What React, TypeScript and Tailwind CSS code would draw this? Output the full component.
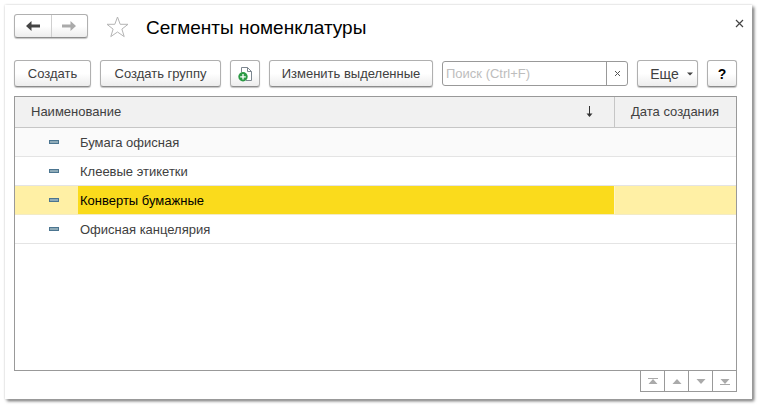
import React from "react";

const buttonBase =
  "flex h-[27px] shrink-0 items-center justify-center rounded-[3px] border border-[#b0b0b0] border-b-[#8c8c8c] bg-linear-to-b from-white from-50% to-[#ededed] shadow-[0_1px_1px_#c4c4c4]";

const rows = [
  { name: "Бумага офисная", date: "" },
  { name: "Клеевые этикетки", date: "" },
  { name: "Конверты бумажные", date: "" },
  { name: "Офисная канцелярия", date: "" },
];

const selectedIndex = 2;

function ItemMark() {
  return (
    <span className="ml-[34px] block h-1 w-2.5 border border-[#4b7590] bg-[#8fabb8] box-border" />
  );
}

function Arrow({ className }: { className: string }) {
  return (
    <svg width="14" height="12" viewBox="0 0 14 12" className={className} aria-hidden="true">
      <path d="M0 6 5.5 1v3.5H14v3H5.5V11z" fill="currentColor" />
    </svg>
  );
}

function NewDocumentIcon() {
  return (
    <svg width="15" height="16" viewBox="0 0 15 16" aria-hidden="true">
      <path d="M3.5 6V1.5h6l4 4v9H8" fill="#fff" stroke="#7d8790" />
      <path d="M9.5 1.5v4h4" fill="none" stroke="#7d8790" />
      <circle cx="5" cy="10.8" r="4.7" fill="#2c9a45" />
      <path d="M5 8v5.6M2.2 10.8h5.6" stroke="#fff" strokeWidth="1.3" />
    </svg>
  );
}

const navigation = [
  { label: "В начало", path: "M2 2h10v1H2zM2.5 8 7 3l4.5 5z" },
  { label: "Вверх", path: "M2.5 8 7 3l4.5 5z" },
  { label: "Вниз", path: "M2.5 3 7 8l4.5-5z" },
  { label: "В конец", path: "M2 8h10v1H2zM2.5 3 7 8l4.5-5z" },
];

export default function App() {
  return (
    <div className="flex min-h-screen bg-white pt-[5px] pr-[9px] pb-[9px] pl-[5px] font-['Liberation_Sans',Arial,sans-serif] text-[13px] leading-4 text-[#404040]">
      <main className="flex min-w-0 flex-1 flex-col bg-white pt-[9px] pr-[15px] pb-[7px] pl-[9px] shadow-[0_0_2px_#d0d0d0,2px_2px_3px_#666]">
        <header className="flex h-6 items-center">
          <div className="flex h-6 w-[74px] shrink-0 rounded-[3px] border border-[#b0b0b0] border-b-[#8c8c8c] bg-linear-to-b from-white from-50% to-[#ededed] shadow-[0_1px_1px_#c4c4c4]">
            <button type="button" aria-label="Назад" className="flex flex-1 items-center justify-center border-r border-[#cfcfcf]">
              <Arrow className="text-[#444]" />
            </button>
            <button type="button" aria-label="Вперед" className="flex flex-1 items-center justify-center">
              <Arrow className="-scale-x-100 text-[#aaa]" />
            </button>
          </div>
          <button type="button" aria-label="В избранное" className="ml-4 shrink-0">
            <svg width="26" height="24" viewBox="0 0 26 24" aria-hidden="true">
              <path d="M13.5 3 16.2 10.3H24L17.9 15.1 20.2 22.6 13.5 18 6.8 22.6 9.1 15.1 3 10.3h7.8z" fill="#fff" stroke="#b4b4b4" />
            </svg>
          </button>
          <h1 className="ml-4 flex-1 pt-1 text-[19px] leading-6 whitespace-nowrap text-black">Сегменты номенклатуры</h1>
          <button type="button" aria-label="Закрыть" className="-mr-[7px] shrink-0 self-start pt-[5px]">
            <svg width="9" height="9" viewBox="0 0 9 9" aria-hidden="true">
              <path d="m1 1 7 7M8 1 1 8" stroke="#444" strokeWidth="1.2" />
            </svg>
          </button>
        </header>

        <div className="mt-[22px] flex items-center gap-[9px] whitespace-nowrap">
          <button type="button" className={`${buttonBase} w-[77px]`}>Создать</button>
          <button type="button" className={`${buttonBase} w-[121px]`}>Создать группу</button>
          <button type="button" aria-label="Создать копированием" className={`${buttonBase} w-[30px]`}>
            <NewDocumentIcon />
          </button>
          <button type="button" className={`${buttonBase} w-[164px]`}>Изменить выделенные</button>
          <div className="flex h-[25px] min-w-0 flex-1 rounded-[3px] border border-[#999] bg-white">
            <input
              type="text"
              aria-label="Поиск"
              placeholder="Поиск (Ctrl+F)"
              className="min-w-0 flex-1 px-[3px] outline-none placeholder:text-[#bdbdbd]"
            />
            <button type="button" aria-label="Очистить" className="flex w-[21px] items-center justify-center border-l border-[#999]">
              <svg width="7" height="7" viewBox="0 0 7 7" aria-hidden="true">
                <path d="m1 1 5 5M6 1 1 6" stroke="#555" />
              </svg>
            </button>
          </div>
          <button type="button" className={`${buttonBase} w-[61px] gap-2 pl-2 text-sm`}>
            Еще
            <svg width="6" height="4" viewBox="0 0 6 4" aria-hidden="true">
              <path d="M0 .5h6L3 3.5z" fill="#444" />
            </svg>
          </button>
          <button type="button" aria-label="Справка" className={`${buttonBase} w-[30px] text-sm font-bold text-black`}>?</button>
        </div>

        <div className="mt-[9px] flex-1 border border-[#999]">
          <table className="w-full table-fixed border-separate border-spacing-0 text-left">
            <colgroup>
              <col className="w-[63px]" />
              <col />
              <col className="w-[121px]" />
            </colgroup>
            <thead>
              <tr className="h-[31px] bg-[#f1f1f1]">
                <th colSpan={2} className="border-r border-b border-[#c6c6c6] pr-5 pl-4 font-normal">
                  <div className="flex items-center justify-between">
                    Наименование
                    <svg width="9" height="12" viewBox="0 0 9 12" aria-hidden="true">
                      <path d="M4.5 0v10" stroke="#333" />
                      <path d="M1.5 7.5 4.5 11l3-3.5z" fill="#333" />
                    </svg>
                  </div>
                </th>
                <th className="border-b border-[#c6c6c6] pl-4 font-normal whitespace-nowrap">Дата создания</th>
              </tr>
            </thead>
            <tbody>
              {rows.map((row, index) => {
                const selected = index === selectedIndex;
                const edge = selected ? "border-b border-[#f3ebc4]" : "border-b border-[#e4e4e4]";
                const pale = selected ? "bg-[#fff0a5]" : index === 0 ? "bg-[#fafafa]" : "bg-white";
                const strong = selected ? "bg-[#fadb1c] border-r border-r-[#fff5c4] text-black" : pale;
                return (
                  <tr key={row.name} className="h-[29px]" aria-selected={selected}>
                    <td className={`${edge} ${pale}`}>
                      <ItemMark />
                    </td>
                    <td className={`${edge} ${strong} pt-0.5 pl-0.5`}>{row.name}</td>
                    <td className={`${edge} ${pale}`}>{row.date}</td>
                  </tr>
                );
              })}
            </tbody>
          </table>
        </div>

        <nav aria-label="Прокрутка списка" className="flex h-[21px] self-end border-r border-b border-[#999]">
          {navigation.map((item) => (
            <button key={item.label} type="button" aria-label={item.label} className="flex w-6 items-center justify-center border-l border-[#999]">
              <svg width="14" height="11" viewBox="0 0 14 11" aria-hidden="true">
                <path d={item.path} fill="#aaa" />
              </svg>
            </button>
          ))}
        </nav>
      </main>
    </div>
  );
}
